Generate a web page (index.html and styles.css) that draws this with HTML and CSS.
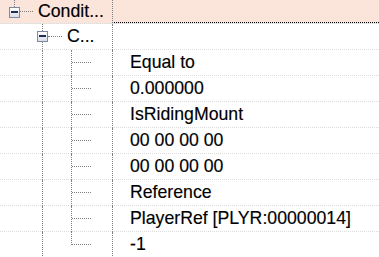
FILE: index.html
```html
<!DOCTYPE html>
<html lang="en">
<head>
    <meta charset="UTF-8">
    <title>Condition tree</title>
    <link rel="stylesheet" href="styles.css">
</head>
<body>
    <div class="grid">
        <div class="row top">
            <div class="tree">
                <span class="box stem-up"></span>
                <span class="hline w13"></span>
                <span class="label">Condit...</span>
            </div>
            <div class="value focus"></div>
        </div>
        <div class="row">
            <div class="tree lvl2">
                <span class="box stem-through"></span>
                <span class="hline w14"></span>
                <span class="label">C...</span>
            </div>
            <div class="value"></div>
        </div>
        <div class="row">
            <div class="tree"><span class="indent"></span><span class="guide"></span><span class="branch"></span></div>
            <div class="value">Equal to</div>
        </div>
        <div class="row">
            <div class="tree"><span class="indent"></span><span class="guide"></span><span class="branch"></span></div>
            <div class="value">0.000000</div>
        </div>
        <div class="row">
            <div class="tree"><span class="indent"></span><span class="guide"></span><span class="branch"></span></div>
            <div class="value">IsRidingMount</div>
        </div>
        <div class="row">
            <div class="tree"><span class="indent"></span><span class="guide"></span><span class="branch"></span></div>
            <div class="value">00 00 00 00</div>
        </div>
        <div class="row">
            <div class="tree"><span class="indent"></span><span class="guide"></span><span class="branch"></span></div>
            <div class="value">00 00 00 00</div>
        </div>
        <div class="row">
            <div class="tree"><span class="indent"></span><span class="guide"></span><span class="branch"></span></div>
            <div class="value">Reference</div>
        </div>
        <div class="row">
            <div class="tree"><span class="indent"></span><span class="guide"></span><span class="branch"></span></div>
            <div class="value">PlayerRef [PLYR:00000014]</div>
        </div>
        <div class="row">
            <div class="tree"><span class="indent"></span><span class="guide"></span><span class="branch last"></span></div>
            <div class="value">-1</div>
        </div>
    </div>
</body>
</html>
```

FILE: styles.css
```css
body {
    margin: 0;
    background-color: #fff;
    font-family: 'Liberation Sans', Arial, sans-serif;
    font-size: 17.7px;
    color: #000;
    -webkit-text-stroke: 0.15px #000;
    overflow: hidden;
}

.grid {
    width: 379px;
    height: 257px;
    overflow: hidden;
}

.row {
    display: flex;
    height: 26px;
    background: repeating-linear-gradient(to right, #dcdcdc 0 1px, transparent 1px 2px) left bottom / 100% 1px no-repeat;
}

.row.top {
    height: 24px;
    background-color: #fbe4da;
}

.tree {
    width: 112px;
    flex-shrink: 0;
    display: flex;
    align-items: stretch;
}

.row.top .tree {
    align-items: center;
    padding-left: 9px;
    box-sizing: border-box;
    height: 23px;
}

.tree.lvl2 {
    align-items: center;
    padding-left: 37px;
    box-sizing: border-box;
    height: 25px;
}

.label {
    margin-left: 5px;
    line-height: 23px;
    white-space: nowrap;
}

.lvl2 .label {
    line-height: 25px;
}

.box {
    position: relative;
    width: 9px;
    height: 9px;
    border: 1px solid #7f88a3;
    background: linear-gradient(#ffffff, #d8dde6);
    flex-shrink: 0;
}

.row.top .box {
    margin-top: 1px;
}

.box::before {
    content: "";
    position: absolute;
    left: 1px;
    top: 3px;
    width: 7px;
    height: 2px;
    background-color: #1f2d55;
}

.stem-up::after {
    content: "";
    position: absolute;
    left: 4px;
    top: -8px;
    height: 7px;
    border-left: 1px dotted #808080;
}

.stem-through::after {
    content: "";
    position: absolute;
    left: 4px;
    top: -8px;
    height: 25px;
    border-left: 1px dotted #808080;
    z-index: -1;
}

.hline {
    border-top: 1px dotted #808080;
    height: 0;
}

.w13 { width: 13px; }
.w14 { width: 14px; }

.indent {
    width: 42px;
}

.guide {
    width: 28px;
    border-left: 1px dotted #808080;
}

.branch {
    width: 20px;
    border-left: 1px dotted #808080;
}

.branch::after {
    content: "";
    display: block;
    width: 19px;
    margin-top: 12px;
    border-top: 1px dotted #808080;
}

.branch.last {
    align-self: flex-start;
    height: 13px;
}

.value {
    flex: 1;
    border-left: 1px dotted #808080;
    padding-left: 17px;
    line-height: 25px;
    white-space: nowrap;
}

.value.focus {
    height: 22px;
    border-bottom: 1px dotted #000;
}
```
